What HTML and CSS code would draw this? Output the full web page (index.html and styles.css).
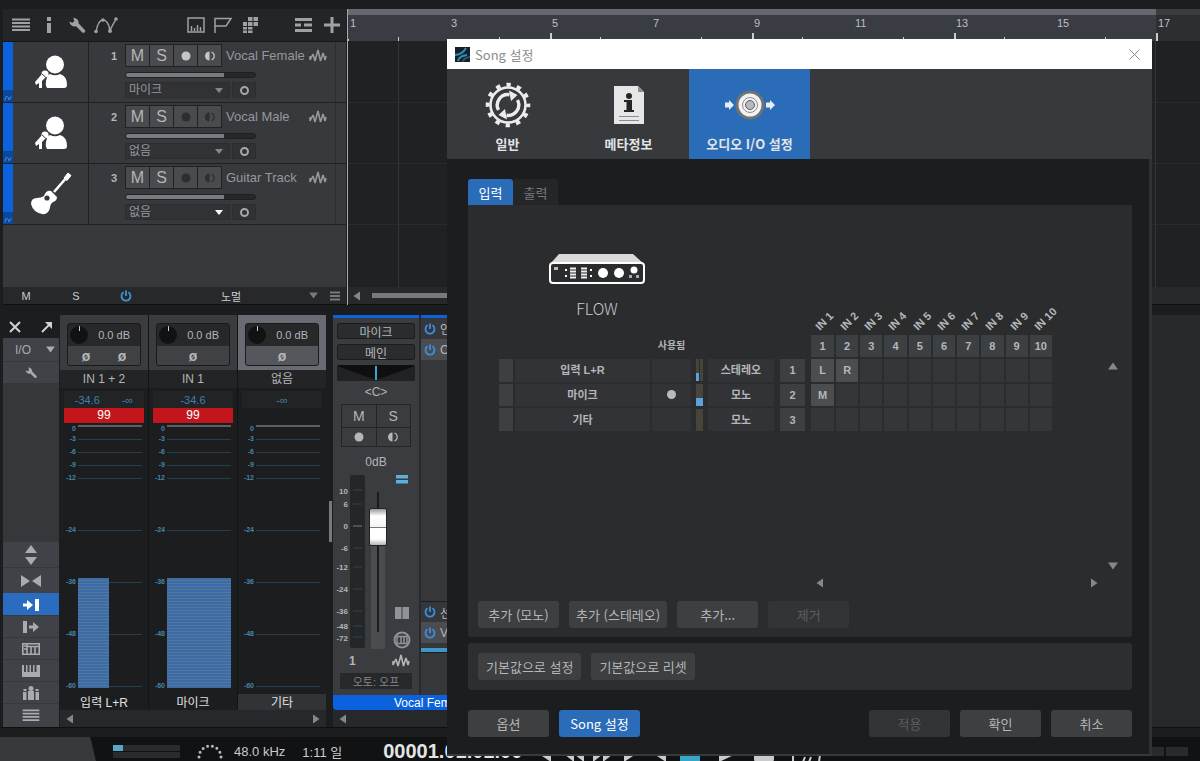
FILE: index.html
```
<!DOCTYPE html>
<html lang="ko">
<head>
  <meta charset="UTF-8">
  <meta name="viewport" content="width=device-width, initial-scale=1.0">
  <title>Song 설정</title>
  <link rel="stylesheet" href="styles.css">
</head>
<body>
  <!-- shared icons -->
  <svg class="sprite" aria-hidden="true">
    <symbol id="i-menu" viewBox="0 0 18 14"><path d="M0 1.500h18M0 5h18M0 8.500h18M0 12h18" stroke="currentColor" stroke-width="2"/></symbol>
    <symbol id="i-wrench" viewBox="0 0 16 16"><path d="M4.500.7A5 5 0 0 1 9.600 6l6 6.400q.5 2.600-2.400 2.400L7.200 8.700A5 5 0 0 1 .8 4.300l2.800 1.200 1.900-1.400z" fill="currentColor"/></symbol>
    <symbol id="i-wave" viewBox="0 0 18 14"><path d="M1 7v4l3-6 2 7L9 1l2.500 11L14 4l2 7 1-4" fill="none" stroke="currentColor" stroke-width="1.600" stroke-linejoin="bevel"/></symbol>
    <symbol id="i-dot" viewBox="0 0 12 12"><circle cx="6" cy="6" r="4.500" fill="currentColor"/></symbol>
    <symbol id="i-monitor" viewBox="0 0 12 12"><path d="M5.500 1.500a4.500 4.500 0 0 0 0 9z" fill="currentColor"/><path d="M7.500 2a4.300 4.300 0 0 1 0 8" fill="none" stroke="currentColor" stroke-width="1.200"/></symbol>
    <symbol id="i-power" viewBox="0 0 12 12"><path d="M3.600 2.300a4.500 4.500 0 1 0 4.800 0M6 .5v5.500" fill="none" stroke="currentColor" stroke-width="1.800"/></symbol>
    <symbol id="i-singer" viewBox="0 0 34 34"><circle cx="21" cy="9.500" r="9" fill="currentColor"/><path d="M12 26q1-6 4-7 5 2.500 10 0 7 2 7 11 0 3-3 3H13q-2-3-1-7z" fill="currentColor"/><path d="M1 27l7-8 4 3-4 4v7H5v-5l-3 2z" fill="currentColor"/><circle cx="11" cy="19" r="3.600" fill="currentColor"/><path d="M7.500 18.500l5 4.500" stroke="#37393d"/></symbol>
    <symbol id="i-guitar" viewBox="0 0 42 42"><path d="M24 19L37 4" stroke="currentColor" stroke-width="2.600"/><path d="M34 5l4-5 3 2.500-4 5z" fill="currentColor" stroke="currentColor"/><path d="M14 23q2-6 7-5l6 6q0 4-4 5-3 2-3 6-2 7-8 6-9-2-11-10 0-6 6-6 4 0 7-2z" fill="currentColor"/><circle cx="17" cy="25" r="2.600" fill="#37393d"/></symbol>
    <symbol id="i-auto" viewBox="0 0 10 10"><path d="M1 8q1-6 3-5t2 4q1 1 3-4" fill="none" stroke="currentColor"/></symbol>
    <symbol id="i-left" viewBox="0 0 8 10"><path d="M7 .5v9L.5 5z" fill="currentColor"/></symbol>
    <symbol id="i-right" viewBox="0 0 8 10"><path d="M1 .5v9L7.500 5z" fill="currentColor"/></symbol>
    <symbol id="i-up" viewBox="0 0 10 8"><path d="M0 7.500h10L5 .5z" fill="currentColor"/></symbol>
    <symbol id="i-down" viewBox="0 0 10 8"><path d="M0 .5h10L5 7.500z" fill="currentColor"/></symbol>
  </svg>

  <section class="arrange">
    <div class="tracks">
      <div class="toolbar">
        <button aria-label="목록"><svg width="18" height="14"><use href="#i-menu"/></svg></button>
        <button aria-label="정보"><svg width="22" height="16" viewBox="0 0 22 16"><path d="M9 0h4v4H9zM9 6h4v10H9z" fill="currentColor"/></svg></button>
        <button aria-label="도구"><svg width="18" height="17"><use href="#i-wrench"/></svg></button>
        <button aria-label="오토메이션"><svg width="24" height="17" viewBox="0 0 24 17"><path d="M2 15Q4 3 9 3t7 10l6-11" fill="none" stroke="currentColor" stroke-width="1.500"/><circle cx="2" cy="14.500" r="1.800" fill="currentColor"/><circle cx="9" cy="3" r="1.800" fill="currentColor"/><circle cx="16" cy="14" r="2" fill="currentColor"/><circle cx="22" cy="2" r="1.800" fill="currentColor"/></svg></button>
        <button class="group" aria-label="타임라인"><svg width="18" height="16" viewBox="0 0 18 16"><path d="M1 1h16v14H1zM4.500 14V9M7.500 14v-3M10.500 14V8M13.500 14v-4" fill="none" stroke="currentColor" stroke-width="1.500"/></svg></button>
        <button aria-label="마커"><svg width="22" height="16" viewBox="0 0 22 16"><path d="M2 16V1.500h16L13 9H2" fill="none" stroke="currentColor" stroke-width="1.500"/></svg></button>
        <button aria-label="어레인저"><svg width="16" height="16" viewBox="0 0 16 16"><path d="M5 0h4.500v4H5zM10.500 0H15v4h-4.500zM0 5h4v4H0zM5 5h4.500v4H5zM10.500 5H15v4h-4.500zM0 10h4v2.500H0zM5 10h4.500v2.500H5zM0 13.500h4V16H0zM5 13.500h4.500V16H5z" fill="currentColor"/></svg></button>
        <button class="group" aria-label="레이어"><svg width="18" height="14" viewBox="0 0 18 14"><path d="M0 1.500h17M0 7h6M9 7h8M0 12.500h17" stroke="currentColor" stroke-width="3"/></svg></button>
        <button class="add" aria-label="트랙 추가"><svg width="16" height="16" viewBox="0 0 16 16"><path d="M8 0v16M0 8h16" stroke="currentColor" stroke-width="3"/></svg></button>
      </div>

      <div class="track armed">
        <div class="track-color"><svg width="8" height="8"><use href="#i-auto"/></svg></div>
        <div class="track-icon"><svg width="34" height="34"><use href="#i-singer"/></svg></div>
        <span class="track-number">1</span>
        <div class="track-body">
          <div class="track-line">
            <div class="track-buttons">
              <button>M</button><button>S</button>
              <button class="rec" aria-label="녹음"><svg width="12" height="12"><use href="#i-dot"/></svg></button>
              <button class="rec" aria-label="모니터"><svg width="12" height="12"><use href="#i-monitor"/></svg></button>
            </div>
            <span class="track-name">Vocal Female</span>
            <svg class="wave" width="18" height="14"><use href="#i-wave"/></svg>
          </div>
          <input class="volume" type="range" value="76" aria-label="Vocal Female 볼륨">
          <div class="track-input">
            <span class="select"><select aria-label="Vocal Female 입력"><option>마이크</option></select></span>
            <button aria-label="스테레오"><i class="ring"></i></button>
          </div>
        </div>
      </div>

      <div class="track">
        <div class="track-color"><svg width="8" height="8"><use href="#i-auto"/></svg></div>
        <div class="track-icon"><svg width="34" height="34"><use href="#i-singer"/></svg></div>
        <span class="track-number">2</span>
        <div class="track-body">
          <div class="track-line">
            <div class="track-buttons">
              <button>M</button><button>S</button>
              <button class="rec" aria-label="녹음"><svg width="12" height="12"><use href="#i-dot"/></svg></button>
              <button class="rec" aria-label="모니터"><svg width="12" height="12"><use href="#i-monitor"/></svg></button>
            </div>
            <span class="track-name">Vocal Male</span>
            <svg class="wave" width="18" height="14"><use href="#i-wave"/></svg>
          </div>
          <input class="volume" type="range" value="76" aria-label="Vocal Male 볼륨">
          <div class="track-input">
            <span class="select"><select aria-label="Vocal Male 입력"><option>없음</option></select></span>
            <button aria-label="스테레오"><i class="ring"></i></button>
          </div>
        </div>
      </div>

      <div class="track">
        <div class="track-color"><svg width="8" height="8"><use href="#i-auto"/></svg></div>
        <div class="track-icon"><svg width="42" height="42"><use href="#i-guitar"/></svg></div>
        <span class="track-number">3</span>
        <div class="track-body">
          <div class="track-line">
            <div class="track-buttons">
              <button>M</button><button>S</button>
              <button class="rec" aria-label="녹음"><svg width="12" height="12"><use href="#i-dot"/></svg></button>
              <button class="rec" aria-label="모니터"><svg width="12" height="12"><use href="#i-monitor"/></svg></button>
            </div>
            <span class="track-name">Guitar Track</span>
            <svg class="wave" width="18" height="14"><use href="#i-wave"/></svg>
          </div>
          <input class="volume" type="range" value="76" aria-label="Guitar Track 볼륨">
          <div class="track-input">
            <span class="select open"><select aria-label="Guitar Track 입력"><option>없음</option></select></span>
            <button aria-label="스테레오"><i class="ring"></i></button>
          </div>
        </div>
      </div>

      <div class="tracks-footer">
        <button>M</button>
        <button>S</button>
        <button class="power" aria-label="전원"><svg width="12" height="12"><use href="#i-power"/></svg></button>
        <button class="mode">노멀</button>
        <svg width="9" height="7"><use href="#i-down"/></svg>
        <svg width="10" height="10" viewBox="0 0 10 10"><path d="M0 1.500h10M0 5h10M0 8.500h10" stroke="currentColor" stroke-width="2"/></svg>
      </div>
    </div>

    <div class="timeline">
      <div class="ruler">
        <span>1</span><span>3</span><span class="tall">5</span><span>7</span><span class="tall">9</span><span>11</span><span class="tall">13</span><span>15</span><span class="tall end">17</span>
      </div>
      <div class="lanes">
        <div class="lane"></div>
        <div class="lane"></div>
        <div class="lane"></div>
      </div>
      <div class="lane-scroll">
        <svg width="8" height="10"><use href="#i-left"/></svg>
        <div class="scroll-thumb"></div>
      </div>
    </div>
  </section>

  <section class="mixer">
    <nav class="mixer-nav">
      <div class="nav-head">
        <button aria-label="닫기"><svg width="12" height="12" viewBox="0 0 12 12"><path d="M1 1l10 10M11 1L1 11" stroke="currentColor" stroke-width="2"/></svg></button>
        <button aria-label="분리"><svg width="12" height="12" viewBox="0 0 12 12"><path d="M1 11l7-7" stroke="currentColor" stroke-width="2"/><path d="M4 1h7v7z" fill="currentColor"/></svg></button>
      </div>
      <button class="nav-io">I/O <svg width="9" height="7"><use href="#i-down"/></svg></button>
      <button class="nav-item" aria-label="설정"><svg width="12" height="12"><use href="#i-wrench"/></svg></button>
      <div class="nav-space"></div>
      <button class="nav-item tall" aria-label="높이"><svg width="12" height="20" viewBox="0 0 12 20"><path d="M0 8h12L6 0zM0 12h12l-6 8z" fill="currentColor"/></svg></button>
      <button class="nav-item tall" aria-label="너비"><svg width="20" height="12" viewBox="0 0 20 12"><path d="M0 0v12l9-6zM20 0v12l-9-6z" fill="currentColor"/></svg></button>
      <button class="nav-item active" aria-label="입력"><svg width="17" height="12" viewBox="0 0 17 12"><path d="M0 4.500h4V1l6 5-6 5V7.500H0zM12 0h4v12h-4z" fill="currentColor"/></svg></button>
      <button class="nav-item" aria-label="출력"><svg width="17" height="12" viewBox="0 0 17 12"><path d="M6 4.500h4V1l6 5-6 5V7.500H6zM0 0h4v12H0z" fill="currentColor"/></svg></button>
      <button class="nav-item" aria-label="외부"><svg width="18" height="12" viewBox="0 0 18 12"><path d="M.8.8h16.400v10.400H.8zM5 1v10M2 3h3M2 6h3M9 4v7M13 4v7M5 3.500h12" fill="none" stroke="currentColor" stroke-width="1.600"/></svg></button>
      <button class="nav-item" aria-label="악기"><svg width="18" height="12" viewBox="0 0 18 12"><path d="M0 0h2v7h2V0h1.500v7h2V0H9v7h2V0h1.500v7h2V0H18v12H0z" fill="currentColor"/></svg></button>
      <button class="nav-item" aria-label="그룹"><svg width="16" height="14" viewBox="0 0 16 14"><circle cx="8" cy="2.500" r="2.500" fill="currentColor"/><path d="M5 5h6v9H5zM0 6h3.500v8H0zM12.500 6H16v8h-3.500zM.5 3h3v2h-3zM12.500 3h3v2h-3z" fill="currentColor"/></svg></button>
      <button class="nav-item" aria-label="채널 목록"><svg width="18" height="13"><use href="#i-menu"/></svg></button>
    </nav>

    <div class="inputs">
      <div class="input-channels">
        <div class="input-channel">
          <div class="gain">
            <div class="gain-box">
              <div class="gain-value"><i class="knob"></i>0.0 dB</div>
              <div class="phase"><button>ø</button><button>ø</button></div>
            </div>
          </div>
          <div class="source">IN 1 + 2</div>
          <div class="peaks"><span>-34.6</span><span>-∞</span></div>
          <div class="clip">99</div>
          <div class="meter">
            <ul class="scale"><li><span>0</span></li><li><span>-3</span></li><li><span>-6</span></li><li><span>-9</span></li><li><span>-12</span></li><li class="wide"><span>-24</span></li><li class="wide"><span>-36</span></li><li class="wide"><span>-48</span></li><li class="wide"><span>-60</span></li></ul>
            <div class="level left" style="height: 110px"></div>
          </div>
          <div class="channel-name">입력 L+R</div>
        </div>

        <div class="input-channel">
          <div class="gain">
            <div class="gain-box">
              <div class="gain-value"><i class="knob"></i>0.0 dB</div>
              <div class="phase"><button>ø</button></div>
            </div>
          </div>
          <div class="source">IN 1</div>
          <div class="peaks"><span>-34.6</span></div>
          <div class="clip">99</div>
          <div class="meter">
            <ul class="scale"><li><span>0</span></li><li><span>-3</span></li><li><span>-6</span></li><li><span>-9</span></li><li><span>-12</span></li><li class="wide"><span>-24</span></li><li class="wide"><span>-36</span></li><li class="wide"><span>-48</span></li><li class="wide"><span>-60</span></li></ul>
            <div class="level" style="height: 110px"></div>
          </div>
          <div class="channel-name">마이크</div>
        </div>

        <div class="input-channel selected">
          <div class="gain">
            <div class="gain-box">
              <div class="gain-value"><i class="knob"></i>0.0 dB</div>
              <div class="phase"><button>ø</button></div>
            </div>
          </div>
          <div class="source">없음</div>
          <div class="peaks"><span>-∞</span></div>
          <div class="clip off"></div>
          <div class="meter">
            <ul class="scale"><li><span>0</span></li><li><span>-3</span></li><li><span>-6</span></li><li><span>-9</span></li><li><span>-12</span></li><li class="wide"><span>-24</span></li><li class="wide"><span>-36</span></li><li class="wide"><span>-48</span></li><li class="wide"><span>-60</span></li></ul>
          </div>
          <div class="channel-name">기타</div>
        </div>
      </div>
      <div class="mixer-scroll">
        <svg width="8" height="10"><use href="#i-left"/></svg>
        <svg width="8" height="10"><use href="#i-right"/></svg>
      </div>
    </div>

    <div class="splitter"><i></i></div>

    <div class="channels">
      <div class="channel-row">
        <div class="strip">
          <button class="slot">마이크</button>
          <button class="slot">메인</button>
          <svg class="pan" width="78" height="16" viewBox="0 0 78 16"><path d="M0 0h78v16H0z" fill="#0f0f10"/><path d="M0 1l39 14L78 1v15H0z" fill="#202224"/><path d="M39 1v14" stroke="#39a5cf" stroke-width="2"/></svg>
          <span class="pan-value">&lt;C&gt;</span>
          <div class="pads">
            <button>M</button><button>S</button>
            <button aria-label="녹음"><svg width="12" height="12"><use href="#i-dot"/></svg></button>
            <button aria-label="모니터"><svg width="12" height="12"><use href="#i-monitor"/></svg></button>
          </div>
          <span class="db">0dB</span>
          <div class="fader-row">
            <svg class="fader-scale" width="28" height="174" viewBox="0 0 28 174">
              <rect x="13" width="15" height="173" rx="2" fill="#242628"/>
              <path d="M16 15h9M16 29h9M16 73h9M16 92h9M16 114h9M16 136h9M16 151h9M16 162h9" stroke="#27475a"/>
              <path d="M16 51h9" stroke="#777a7e"/>
              <g><text x="11" y="19">10</text><text x="11" y="32">6</text><text x="11" y="54">0</text><text x="11" y="76">-6</text><text x="11" y="95">-12</text><text x="11" y="117">-24</text><text x="11" y="139">-36</text><text x="11" y="154">-48</text><text x="11" y="166">-72</text></g>
            </svg>
            <input class="fader" type="range" value="76" aria-label="페이더">
            <div class="fader-side">
              <svg width="12" height="10" viewBox="0 0 12 10"><path d="M0 0h12v3.500H0zM0 5h12v3.500H0z" fill="#5bb0dc"/></svg>
              <svg class="end" width="14" height="12" viewBox="0 0 14 12"><path d="M0 0h6.500v12H0zM7.500 0H14v12H7.500z" fill="#8f9296"/></svg>
              <svg width="18" height="18" viewBox="0 0 18 18"><circle cx="9" cy="9" r="7.500" fill="none" stroke="#8f9296" stroke-width="2"/><path d="M4 5.500h10v7H4zM8 5.500v7M11 5.500v7" fill="none" stroke="#8f9296" stroke-width="1.500"/></svg>
            </div>
          </div>
          <div class="strip-info"><b>1</b><svg width="18" height="14"><use href="#i-wave"/></svg></div>
          <button class="auto">오토: 오프</button>
        </div>
        <div class="racks">
          <div class="rack"><svg width="12" height="12"><use href="#i-power"/></svg>인</div>
          <div class="rack on"><svg width="12" height="12"><use href="#i-power"/></svg>C</div>
          <div class="rack sends"><svg width="12" height="12"><use href="#i-power"/></svg>선</div>
          <div class="rack on"><svg width="12" height="12"><use href="#i-power"/></svg>Vo</div>
          <div class="send-level"></div>
        </div>
      </div>
      <div class="strip-name">Vocal Female</div>
      <div class="mixer-scroll"><svg width="8" height="10"><use href="#i-left"/></svg></div>
    </div>
  </section>

  <footer class="transport">
    <div class="corner"></div>
    <div class="cpu"><i></i><i></i></div>
    <svg width="26" height="16" viewBox="0 0 26 16"><path d="M2 14a11 11 0 0 1 22 0" fill="none" stroke="#b8babc" stroke-width="3" stroke-linecap="round" stroke-dasharray="0 4.900"/></svg>
    <span>48.0 kHz</span>
    <span>1:11 일</span>
    <strong>00001.01.01.00</strong>
    <div class="transport-buttons">
      <button aria-label="처음"><svg width="20" height="16" viewBox="0 0 20 16"><path d="M16 0v16L4 8z" fill="currentColor"/></svg></button>
      <button aria-label="되감기"><svg width="20" height="16" viewBox="0 0 20 16"><path d="M10 0v16L0 8zM20 0v16L10 8z" fill="currentColor"/></svg></button>
      <button aria-label="앞으로"><svg width="20" height="16" viewBox="0 0 20 16"><path d="M0 0v16l10-8zM10 0v16l10-8z" fill="currentColor"/></svg></button>
      <button aria-label="다음"><svg width="20" height="16" viewBox="0 0 20 16"><path d="M2 0v16l12-8z" fill="currentColor"/></svg></button>
      <button aria-label="끝"><svg width="20" height="16" viewBox="0 0 20 16"><path d="M15 0v16L3 8z" fill="currentColor"/></svg></button>
      <button class="stop" aria-label="정지"><svg width="20" height="16" viewBox="0 0 20 16"><path d="M0 0h20v16H0z" fill="currentColor"/></svg></button>
      <button aria-label="재생"><svg width="20" height="16" viewBox="0 0 20 16"><path d="M2 0v16l17-8z" fill="currentColor"/></svg></button>
      <button aria-label="녹음"><svg width="20" height="16" viewBox="0 0 20 16"><rect width="20" height="16" rx="3" fill="currentColor"/></svg></button>
      <button aria-label="루프"><svg width="32" height="16" viewBox="0 0 32 16"><path d="M2 16V1h28l-2 15M12 16l2-5M18 16l2-5" fill="none" stroke="currentColor" stroke-width="2"/></svg></button>
    </div>
    <div class="master"><i></i><i></i></div>
  </footer>

  <div class="dialog" role="dialog" aria-labelledby="dialog-title">
    <header class="title-bar">
      <svg width="15" height="15" viewBox="0 0 15 15"><path d="M0 0h15v15H0z" fill="#14202b"/><path d="M0 8q7 0 11-7M3 14q1-5 9-6" fill="none" stroke="#2f8fae" stroke-width="2"/><path d="M8 15q0-4 7-5" fill="none" stroke="#2d536c" stroke-width="2"/></svg>
      <span id="dialog-title">Song 설정</span>
      <button aria-label="창 닫기"><svg width="11" height="11" viewBox="0 0 11 11"><path d="M.5.5l10 10M10.500.5l-10 10" stroke="#8c8c8c"/></svg></button>
    </header>

    <div class="pages">
      <button class="page">
        <svg width="46" height="46" viewBox="0 0 46 46">
          <circle cx="23" cy="23" r="17.500" fill="none" stroke="#ececec" stroke-width="2.600"/>
          <circle cx="23" cy="23" r="20.300" fill="none" stroke="#ececec" stroke-width="4" stroke-dasharray="4.400 6.229" stroke-dashoffset="2.200"/>
          <path d="M13.500 28a10.500 10.500 0 0 1 11-15.300M32.500 18a10.500 10.500 0 0 1-11 15.300" fill="none" stroke="#ececec" stroke-width="3.400"/>
          <path d="M24 8.500l8.500 4.500-6.500 6zM22 37.500l-8.500-4.500 6.500-6z" fill="#ececec"/>
        </svg>
        일반
      </button>
      <button class="page">
        <svg width="30" height="46" viewBox="0 0 30 46">
          <path d="M0 4h24l6 6v32H0z" fill="#e6e6e6"/><path d="M24 4v6h6z" fill="#8a8c8f"/>
          <circle cx="15" cy="14" r="3" fill="#232527"/><path d="M10 18h8v10h2v2H10v-2h2.500v-8H10z" fill="#232527"/>
          <path d="M5 34.500h20M5 38.500h20" stroke="#8a8c8f"/>
        </svg>
        메타정보
      </button>
      <button class="page active">
        <svg width="50" height="46" viewBox="0 0 50 46">
          <circle cx="25" cy="23" r="13" fill="#f2f2f2" stroke="#707376" stroke-width="3"/>
          <circle cx="25" cy="23" r="7.500" fill="#f2f2f2" stroke="#8d9093"/>
          <circle cx="25" cy="23" r="4.500" fill="#b7b9bb" stroke="#5c5f62"/>
          <path d="M0 20.500h4V18l5 5-5 5v-2.500H0zM41 20.500h4V18l5 5-5 5v-2.500h-4z" fill="#e8edf3"/>
        </svg>
        오디오 I/O 설정
      </button>
    </div>

    <div class="dialog-body">
      <div class="tabs">
        <button class="active">입력</button>
        <button>출력</button>
      </div>

      <div class="panel">
        <div class="device">
          <svg width="96" height="30" viewBox="0 0 96 30">
            <path d="M10 0h74l11 10H1z" fill="#d9d9d9"/>
            <rect x="1" y="9" width="94" height="20" rx="3" fill="#2b2c2e" stroke="#fff" stroke-width="2"/>
            <path d="M5 13h4v3H5z" fill="#bbb"/>
            <path d="M16 16h2M16 22h2M41 16h2M41 22h2" stroke="#fff" stroke-width="2"/>
            <path d="M21 14.500h6M21 17.500h6M21 20.500h6M21 23.500h6M32 14.500h6M32 17.500h6M32 20.500h6M32 23.500h6" stroke="#eee" stroke-width="2"/>
            <circle cx="54" cy="19" r="5" fill="#fff"/><circle cx="70" cy="19" r="5" fill="#fff"/><circle cx="85" cy="16" r="3.500" fill="#fff"/>
            <path d="M80 21h3v3h-3zM87 21h3v3h-3z" fill="#aaa"/>
          </svg>
          <p>FLOW</p>
        </div>

        <div class="matrix">
          <table class="routing">
            <colgroup><col class="c-grip"><col class="c-name"><col class="c-used"><col class="c-meter"><col class="c-format"><col class="c-number"><col class="c-first"><col span="9"></colgroup>
            <thead>
              <tr class="ports">
                <td colspan="6"></td>
                <th class="first"><span>IN 1</span></th><th><span>IN 2</span></th><th><span>IN 3</span></th><th><span>IN 4</span></th><th><span>IN 5</span></th><th><span>IN 6</span></th><th><span>IN 7</span></th><th><span>IN 8</span></th><th><span>IN 9</span></th><th><span>IN 10</span></th>
              </tr>
              <tr class="numbers">
                <td class="blank" colspan="2"></td><td class="blank used-label">사용됨</td><td class="blank" colspan="3"></td>
                <th class="first">1</th><th>2</th><th>3</th><th>4</th><th>5</th><th>6</th><th>7</th><th>8</th><th>9</th><th>10</th>
              </tr>
            </thead>
            <tbody>
              <tr>
                <td class="grip"></td><td class="name">입력 L+R</td><td class="name"></td>
                <td class="signal"><div class="signal-pair"><i><b style="height: 8px"></b></i><i></i></div></td>
                <td class="name format">스테레오</td><td class="grip number">1</td>
                <td class="first on">L</td><td class="on">R</td><td></td><td></td><td></td><td></td><td></td><td></td><td></td><td></td>
              </tr>
              <tr>
                <td class="grip"></td><td class="name">마이크</td><td class="name"><i class="used"></i></td>
                <td class="signal"><div class="signal-pair"><i><b style="height: 8px"></b></i></div></td>
                <td class="name format">모노</td><td class="grip number">2</td>
                <td class="first on">M</td><td></td><td></td><td></td><td></td><td></td><td></td><td></td><td></td><td></td>
              </tr>
              <tr>
                <td class="grip"></td><td class="name">기타</td><td class="name"></td>
                <td class="signal"><div class="signal-pair"><i></i></div></td>
                <td class="name format">모노</td><td class="grip number">3</td>
                <td class="first"></td><td></td><td></td><td></td><td></td><td></td><td></td><td></td><td></td><td></td>
              </tr>
            </tbody>
          </table>
          <div class="v-scroll">
            <svg width="10" height="8"><use href="#i-up"/></svg>
            <svg width="10" height="8"><use href="#i-down"/></svg>
          </div>
        </div>
        <div class="h-scroll">
          <svg width="8" height="10"><use href="#i-left"/></svg>
          <svg width="8" height="10"><use href="#i-right"/></svg>
        </div>

        <div class="buttons">
          <button class="btn">추가 (모노)</button>
          <button class="btn">추가 (스테레오)</button>
          <button class="btn">추가...</button>
          <button class="btn" disabled>제거</button>
        </div>
      </div>

      <div class="panel defaults buttons">
        <button class="btn">기본값으로 설정</button>
        <button class="btn">기본값으로 리셋</button>
      </div>

      <div class="buttons dialog-actions">
        <button class="btn">옵션</button>
        <button class="btn primary">Song 설정</button>
        <button class="btn push" disabled>적용</button>
        <button class="btn">확인</button>
        <button class="btn">취소</button>
      </div>
    </div>
  </div>
</body>
</html>
```
FILE: styles.css
```
* {
  box-sizing: border-box;
}
body {
  margin: 0;
  min-height: 100vh;
  padding-top: 9px;
  display: flex;
  flex-direction: column;
  position: relative;
  overflow: hidden;
  background: #1c1d1f;
  color: #b4b6b9;
  font-family: "Liberation Sans", "Noto Sans CJK KR", sans-serif;
  font-size: 12px;
}
button, select, input {
  font: inherit;
  color: inherit;
  margin: 0;
}
button {
  padding: 0;
  border: 0;
  background: none;
  display: flex;
  align-items: center;
  justify-content: center;
  white-space: nowrap;
}
svg {
  display: block;
  flex: none;
}
.sprite {
  position: absolute;
  width: 0;
  height: 0;
}

/* track list */
.arrange {
  display: flex;
  height: 296px;
  padding-left: 3px;
}
.tracks {
  width: 343px;
  flex: none;
  display: flex;
  flex-direction: column;
  background: #37393d;
  border-bottom: 1px solid #0e0f10;
}
.toolbar {
  height: 33px;
  display: flex;
  align-items: center;
  gap: 8px;
  padding: 0 6px 0 9px;
  background: #232629;
  border-bottom: 1px solid #141516;
  color: #9fa1a3;
}
.toolbar .group {
  margin-left: auto;
}
.toolbar .group ~ .group {
  margin-left: 28px;
}
.toolbar .add {
  margin-left: 3px;
}
.track {
  height: 61px;
  display: flex;
  border-bottom: 1px solid #1f2022;
}
.track-color {
  flex: none;
  width: 10px;
  display: flex;
  align-items: flex-end;
  justify-content: center;
  background: linear-gradient(#0b62dc 48px, #0a489b 48px);
  color: #5d9cf0;
}
.track-icon {
  flex: none;
  width: 76px;
  display: flex;
  align-items: center;
  justify-content: center;
  border-right: 1px solid #1f2022;
  color: #fff;
}
.track-number {
  flex: none;
  width: 36px;
  padding: 8px 8px 0 0;
  text-align: right;
  font-size: 11px;
  font-weight: bold;
}
.track-body {
  flex: 1;
  min-width: 0;
  padding: 2px 8px 0 0;
  margin-right: 10px;
  border-right: 1px solid #2c2d30;
}
.track-line {
  display: flex;
  align-items: center;
  gap: 4px;
}
.track-buttons {
  flex: none;
  display: flex;
  gap: 1px;
  padding: 1px;
  background: #1f2123;
}
.track-buttons button {
  width: 23px;
  height: 21px;
  background: #494b4f;
  font-size: 16px;
}
.track-buttons .rec {
  color: #2c2e31;
}
.armed .rec {
  color: #c4c6c8;
}
.track-name {
  flex: 1;
  font-size: 13px;
  color: #96989b;
  white-space: nowrap;
}
.wave {
  color: #96989b;
}
.volume {
  appearance: none;
  display: block;
  width: 131px;
  height: 6px;
  margin: 5px 0 4px;
  border: 1px solid #1f2022;
  border-radius: 3px;
  background: linear-gradient(90deg, #797b80 76%, #27282b 76%);
}
.volume::-webkit-slider-thumb {
  appearance: none;
  width: 1px;
  height: 4px;
}
.track-input {
  display: flex;
  gap: 2px;
}
.track-input button {
  width: 24px;
  height: 16px;
  border: 1px solid #2b2d30;
  background: #303235;
}
.ring {
  width: 9px;
  height: 9px;
  border: 2px solid #a5a7aa;
  border-radius: 50%;
}
.select {
  position: relative;
  width: 105px;
}
.select::after {
  content: "";
  position: absolute;
  right: 7px;
  top: 6px;
  border: 4px solid transparent;
  border-top: 5px solid #85878a;
  border-bottom: 0;
}
.select.open::after {
  border-top-color: #fff;
}
select {
  appearance: none;
  display: block;
  width: 100%;
  height: 16px;
  padding: 0 3px;
  border: 1px solid #2b2d30;
  border-radius: 0;
  background: #303235;
  font-size: 12px;
  line-height: 14px;
  color: #96989b;
}
.tracks-footer {
  margin-top: auto;
  height: 17px;
  display: flex;
  align-items: center;
  padding-right: 6px;
  gap: 12px;
  background: #27282a;
  color: #77797c;
}
.tracks-footer button {
  width: 38px;
  font-size: 11px;
  color: #c9cbcd;
}
.tracks-footer button:first-child {
  margin-left: 4px;
}
.tracks-footer .power {
  color: #3f92cf;
}
.tracks-footer .mode {
  flex: 1;
  padding-left: 8px;
}

/* timeline */
.timeline {
  flex: 1;
  min-width: 0;
  display: flex;
  flex-direction: column;
  margin-left: 1px;
  border-left: 1px solid #a9abad;
  background: #1f2123;
}
.ruler {
  display: flex;
  height: 32px;
  flex: none;
  padding-top: 6px;
  background: linear-gradient(#65696f 6px, #393c43 6px);
  overflow: hidden;
}
.ruler span {
  flex: none;
  width: 101px;
  padding-left: 2px;
  font-size: 11px;
  line-height: 16px;
  color: #bdbfc1;
  background:
    linear-gradient(#c9cbcd, #c9cbcd) 50px 100% / 1px 4px no-repeat,
    linear-gradient(#c9cbcd, #c9cbcd) 0 100% / 1px 2px no-repeat;
}
.ruler .tall {
  background:
    linear-gradient(#c9cbcd, #c9cbcd) 50px 100% / 1px 4px no-repeat,
    linear-gradient(#c9cbcd, #c9cbcd) 0 100% / 2px 8px no-repeat;
}
.ruler .end {
  flex: 1;
  margin-top: -6px;
  padding-top: 6px;
  background:
    linear-gradient(#c9cbcd, #c9cbcd) 0 100% / 2px 8px no-repeat,
    linear-gradient(#3a3c40 6px, #2d2e31 6px);
}
.lanes {
  flex: 1;
  background: repeating-linear-gradient(90deg, transparent 0 50px, #323437 50px 51px, transparent 51px 100px, #323437 100px 101px);
}
.lane {
  height: 61px;
  border-bottom: 1px solid #292b2d;
}
.lane:first-child {
  margin-top: 1px;
}
.lane-scroll {
  height: 18px;
  display: flex;
  align-items: center;
  gap: 11px;
  padding-left: 5px;
  background: #27282b;
  border-bottom: 1px solid #0e0f10;
  color: #85878a;
}
.scroll-thumb {
  width: 200px;
  height: 5px;
  background: #77797c;
}

/* mixer */
.mixer {
  flex: 1;
  display: flex;
  margin: 10px 0 9px;
  padding-left: 3px;
  border-bottom: 1px solid #0e0f10;
}
.mixer-nav {
  width: 56px;
  display: flex;
  flex-direction: column;
  background: #35373b;
  color: #a9abad;
}
.nav-head {
  height: 23px;
  display: flex;
  align-items: center;
  justify-content: space-between;
  padding: 0 6px;
  background: #1c1d1f;
  color: #d0d2d3;
}
.nav-io {
  height: 23px;
  gap: 15px;
  padding-left: 8px;
  background: #3f4246;
}
.nav-item {
  height: 22px;
  background: #3f4246;
  border-top: 1px solid #36383b;
}
.nav-item.tall {
  height: 26px;
}
.nav-item:last-child {
  height: 24px;
}
.nav-item.active {
  background: #2a6cbf;
  border-color: #2a6cbf;
  color: #fff;
}
.nav-space {
  flex: 1;
}
.inputs {
  flex: none;
  display: flex;
  flex-direction: column;
  margin-left: 1px;
  background: #131415;
}
.input-channels {
  flex: 1;
  display: flex;
  gap: 1px;
}
.input-channel {
  width: 88px;
  display: flex;
  flex-direction: column;
  background: #1c1d1f;
}
.gain {
  height: 55px;
  padding: 8px 7px 4px;
  background: #3a3c40;
}
.selected .gain {
  background: #686b73;
}
.gain-box {
  height: 43px;
  border: 1px solid #191a1b;
  border-radius: 3px;
  overflow: hidden;
  background: #26282a;
}
.gain-value {
  height: 22px;
  display: flex;
  align-items: center;
  justify-content: space-between;
  padding: 0 10px 0 2px;
  font-size: 11px;
}
.knob {
  width: 18px;
  height: 18px;
  border-radius: 50%;
  background: linear-gradient(#c9cbcd, #c9cbcd) 50% 0 / 1px 5px no-repeat, #111213;
}
.phase {
  display: flex;
  height: 20px;
  background: #3f4144;
}
.phase button {
  flex: 1;
  font-size: 14px;
  font-weight: bold;
}
.selected .phase {
  background: #54575b;
}
.source {
  height: 18px;
  line-height: 18px;
  text-align: center;
  background: #222425;
  font-size: 12px;
}
.peaks {
  height: 17px;
  margin: 3px 4px 0;
  display: flex;
  align-items: center;
  justify-content: space-around;
  background: #222325;
  color: #3f80ad;
  font-size: 11px;
}
.clip {
  height: 15px;
  margin: 0 4px;
  line-height: 15px;
  text-align: center;
  font-size: 12px;
  color: #fff;
  background: #c3161c;
}
.clip.off {
  background: none;
}
.meter {
  position: relative;
  padding: 0 6px 0 5px;
  margin-top: -1px;
}
.scale {
  list-style: none;
  margin: 0;
  padding: 0;
  font-size: 7px;
  font-weight: bold;
  color: #4585a8;
}
.scale li {
  height: 8px;
  margin-top: 5px;
  display: flex;
  align-items: center;
  gap: 2px;
  line-height: 8px;
}
.scale li.wide {
  margin-top: 44px;
}
.scale li:first-child {
  margin-top: 0;
}
.scale li:first-child span {
  padding-top: 6px;
}
.scale span {
  width: 11px;
  text-align: right;
}
.scale li::after {
  content: "";
  flex: 1;
  height: 1px;
  background: #22404f;
}
.scale li:first-child::after {
  height: 2px;
  background: #5b6063;
}
.level {
  position: absolute;
  left: 18px;
  right: 6px;
  bottom: 2px;
  background: repeating-linear-gradient(#3f6ba3 0 2px, #4f78a8 2px 3px);
}
.level.left {
  right: 39px;
}
.channel-name {
  margin-top: auto;
  height: 16px;
  line-height: 18px;
  text-align: center;
  color: #e0e1e2;
  font-size: 12px;
}
.selected .channel-name {
  background: #313336;
}
.mixer-scroll {
  height: 17px;
  display: flex;
  align-items: center;
  justify-content: space-between;
  padding: 0 6px;
  background: #27282b;
  color: #85878a;
}
.splitter {
  width: 6px;
  display: flex;
  align-items: center;
  justify-content: flex-end;
  background: #1c1d1f;
}
.splitter i {
  width: 3px;
  height: 41px;
  background: #77797c;
}
.channels {
  flex: 1;
  min-width: 0;
  display: flex;
  flex-direction: column;
  margin-left: 1px;
  background: #28292c;
}
.channel-row {
  flex: 1;
  display: flex;
}
.strip {
  width: 86px;
  display: flex;
  flex-direction: column;
  align-items: center;
  padding-top: 5px;
  border-top: 3px solid #0b62dc;
  background: #3a3c40;
}
.slot {
  width: 78px;
  height: 16px;
  margin-bottom: 5px;
  border: 1px solid #1b1c1e;
  border-radius: 2px;
  background: #2a2c2e;
}
.pan {
  border-radius: 2px;
}
.pan-value {
  margin: 4px 0 5px;
  line-height: 14px;
}
.pads {
  display: grid;
  grid-template-columns: 1fr 1fr;
  gap: 1px;
  width: 70px;
  height: 43px;
  padding: 1px;
  background: #232527;
}
.pads button {
  background: #3a3c40;
  font-size: 14px;
}
.db {
  margin: 8px 0 6px;
  line-height: 14px;
}
.fader-row {
  align-self: stretch;
  display: flex;
  padding-left: 4px;
  gap: 4px;
}
.fader-scale {
  overflow: visible;
}
.fader-scale g {
  font-size: 8px;
  font-weight: bold;
  text-anchor: end;
  fill: #b4b6b9;
}
.fader {
  appearance: none;
  writing-mode: vertical-lr;
  direction: rtl;
  width: 18px;
  height: 174px;
  background:
    linear-gradient(#1b1c1e, #1b1c1e) 50% 50% / 2px 140px no-repeat,
    linear-gradient(#3a3c40 60px, transparent 60px),
    linear-gradient(90deg, #3a3c40 2px, #4a4c50 2px 16px, #3a3c40 16px);
}
.fader::-webkit-slider-thumb {
  appearance: none;
  width: 18px;
  height: 38px;
  border: 1px solid #222;
  border-radius: 2px;
  background: linear-gradient(#999, #fff 7px, #f4f4f4 18px, #777 18px 19px, #fff 19px 30px, #b5b5b5);
}
.fader-side {
  flex: 1;
  display: flex;
  flex-direction: column;
  align-items: center;
  gap: 12px;
  padding-right: 6px;
}
.fader-side .end {
  margin-top: auto;
}
.strip-info {
  align-self: stretch;
  display: flex;
  align-items: center;
  justify-content: space-between;
  height: 24px;
  padding: 0 9px 0 16px;
}
.auto {
  width: 72px;
  height: 16px;
  background: #27282a;
  color: #85878a;
  font-size: 11px;
}
.racks {
  width: 114px;
  display: flex;
  flex-direction: column;
  margin-left: 2px;
  border-top: 3px solid #0b62dc;
  background: #35373b;
}
.rack {
  height: 21px;
  display: flex;
  align-items: center;
  gap: 4px;
  padding-left: 3px;
}
.rack svg {
  color: #3b8de0;
}
.rack.on {
  background: #4a4c50;
}
.rack.sends {
  margin-top: auto;
  border-top: 1px solid #1b1c1e;
}
.send-level {
  height: 5px;
  margin: 5px 0 42px;
  border-bottom: 1px solid #1b1c1e;
  background: #4097c9;
}
.strip-name {
  width: 202px;
  height: 15px;
  padding-left: 61px;
  border-radius: 0 0 0 4px;
  line-height: 16px;
  background: #0b62dc;
  color: #fff;
  white-space: nowrap;
}

/* transport */
.transport {
  height: 24px;
  flex: none;
  display: flex;
  align-items: center;
  gap: 11px;
  padding: 4px 12px 0 0;
  background: #111213;
  color: #c9cbcd;
  font-size: 13px;
}
.transport span {
  margin-right: 6px;
  white-space: nowrap;
}
.corner {
  width: 96px;
  height: 24px;
  margin: -4px 6px 0 0;
  background: #37393c;
  clip-path: polygon(0 0, 94% 0, 100% 100%, 0 100%);
}
.cpu {
  display: grid;
  gap: 1px;
  width: 67px;
  margin-right: 6px;
}
.cpu i, .master i {
  height: 6px;
  background: #292b2d;
}
.cpu i:first-child {
  background: linear-gradient(90deg, #54a8ca 10px, #292b2d 10px);
}
.transport strong {
  margin-left: 24px;
  font-size: 20px;
  line-height: 20px;
  color: #e3e4e5;
}
.transport-buttons {
  display: flex;
  gap: 9px;
  padding: 6px 0 0 2px;
}
.transport .stop {
  color: #35a8c8;
}
.stop ~ button {
  margin-left: 8px;
}
.master {
  margin-left: auto;
  display: flex;
  gap: 2px;
}
.master i {
  width: 22px;
  height: 9px;
}

/* settings dialog */
.dialog {
  position: absolute;
  top: 39px;
  left: 447px;
  right: 48px;
  background: #1c1d1f;
  font-family: "Noto Sans CJK KR", "Noto Sans", sans-serif;
  font-size: 13px;
}
.title-bar {
  height: 30px;
  display: flex;
  align-items: center;
  gap: 5px;
  padding: 0 12px 0 8px;
  background: #fff;
  color: #8c8c8c;
}
.title-bar button {
  margin-left: auto;
}
.pages {
  height: 90px;
  display: flex;
  background: #37393d;
}
.page {
  width: 121px;
  flex-direction: column;
  gap: 7px;
  padding-top: 6px;
  line-height: 18px;
  font-weight: bold;
  color: #e3e4e5;
}
.page.active {
  background: #2a6cb8;
}
.dialog-body {
  padding: 20px 17px 17px 21px;
  border-right: 3px solid #303236;
  border-bottom: 2px solid #37393d;
}
.tabs {
  display: flex;
}
.tabs button {
  width: 45px;
  height: 26px;
  border-radius: 3px 3px 0 0;
  background: #252628;
  color: #77797c;
}
.tabs .active {
  background: #2a6cb8;
  color: #fff;
}
.panel {
  padding: 49px 10px 9px;
  background: #2b2c2e;
  border-radius: 0 0 3px 3px;
}
.device {
  width: 96px;
  margin-left: 71px;
}
.device p {
  margin: 14px 0 0;
  text-align: center;
  font-size: 16px;
  font-weight: 300;
  line-height: 20px;
  color: #c9cbcd;
}
.matrix {
  display: flex;
  justify-content: space-between;
  height: 255px;
  padding-left: 19px;
}
.routing {
  width: 557px;
  height: 115px;
  table-layout: fixed;
  border-spacing: 2px;
  font-family: "Liberation Sans", "Noto Sans CJK KR", sans-serif;
  font-size: 11px;
  font-weight: bold;
  line-height: 16px;
  text-align: center;
}
.c-grip { width: 14px; }
.c-name { width: 135px; }
.c-used { width: 39px; }
.c-meter { width: 13px; }
.c-format { width: 66px; }
.c-number { width: 29px; }
.c-first { width: 27px; }
.routing td, .routing th {
  height: 22px;
  padding: 0;
  background: #353638;
  background-clip: padding-box;
}
.routing .ports td, .routing .ports th {
  height: 13px;
  background: none;
}
.ports span {
  display: block;
  width: 0;
  height: 13px;
  margin-left: 11px;
  line-height: 13px;
  white-space: nowrap;
  transform: rotate(-45deg);
  transform-origin: 0 100%;
}
.routing .first {
  border-left: 4px solid transparent;
}
.routing .numbers th, .routing .grip {
  background-color: #3d4042;
}
.routing .numbers .blank {
  background: none;
}
.routing .name {
  background-color: #323336;
}
.routing .number {
  border-left: 4px solid transparent;
}
.routing .on {
  background-color: #4b4e51;
}
.routing .used-label {
  font-size: 10px;
}
.routing .signal {
  background: none;
}
.used {
  display: block;
  width: 9px;
  height: 9px;
  margin: 0 auto;
  border-radius: 50%;
  background: #b9bbbd;
}
.signal-pair {
  display: flex;
  gap: 1px;
  width: 7px;
  height: 22px;
  margin: 0 auto;
}
.signal-pair i {
  flex: 1;
  display: flex;
  align-items: flex-end;
  background: #47443a;
}
.signal-pair b {
  width: 100%;
  background: #5ba3dc;
}
.v-scroll {
  width: 18px;
  display: flex;
  flex-direction: column;
  justify-content: space-between;
  align-items: center;
  padding: 44px 0 3px;
  color: #85878a;
}
.h-scroll {
  display: flex;
  justify-content: space-between;
  align-items: center;
  height: 16px;
  margin: 2px 24px 10px 338px;
  color: #85878a;
}
.buttons {
  display: flex;
  gap: 10px;
}
.btn {
  min-width: 81px;
  height: 27px;
  padding: 0 7px;
  border-radius: 3px;
  background: #3d3f41;
  color: #b4b6b9;
}
.btn.primary {
  background: #2a6cb8;
  color: #fff;
}
.btn:disabled {
  background: #323436;
  color: #5b5d60;
}
.panel.defaults {
  margin-top: 6px;
  padding: 10px;
  border-radius: 3px;
  background: #2d2e32;
}
.defaults .btn {
  padding: 0 8px;
}
.dialog-actions {
  margin-top: 20px;
}
.push {
  margin-left: auto;
}
```
